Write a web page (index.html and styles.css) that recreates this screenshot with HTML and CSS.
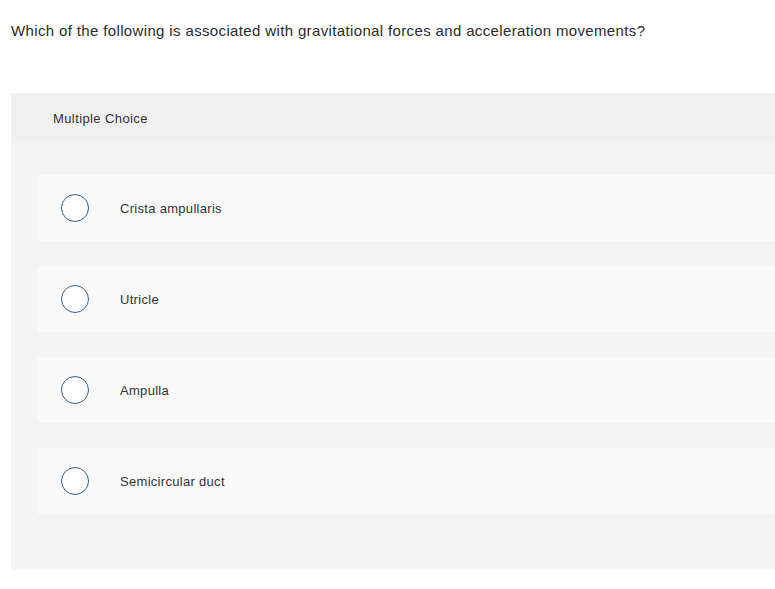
FILE: index.html
```html
<!DOCTYPE html>
<html>
<head>
<meta charset="utf-8">
<link rel="stylesheet" href="styles.css">
</head>
<body>
<div class="page">
  <p class="question">Which of the following is associated with gravitational forces and acceleration movements?</p>
  <div class="panel">
    <div class="panel-head">Multiple Choice</div>
    <div class="panel-body">
      <div class="option"><span class="radio"></span><span class="label">Crista ampullaris</span></div>
      <div class="option"><span class="radio"></span><span class="label">Utricle</span></div>
      <div class="option"><span class="radio"></span><span class="label">Ampulla</span></div>
      <div class="option"><span class="radio"></span><span class="label">Semicircular duct</span></div>
    </div>
  </div>
</div>
</body>
</html>
```
FILE: styles.css
```css
html, body {
  margin: 0;
  padding: 0;
  overflow: hidden;
  background: #ffffff;
}
.page {
  padding: 21px 0 0 11px;
  font-family: "Liberation Sans", Arial, sans-serif;
  color: #222;
}
.question {
  margin: 0;
  font-size: 15px;
  line-height: 20px;
  letter-spacing: 0.36px;
  color: #2b2b2b;
}
.panel {
  margin-top: 52px;
  width: 800px;
  background: #f4f4f4;
}
.panel-head {
  height: 50px;
  background: #f0f0f0;
  padding-left: 42px;
  display: flex;
  align-items: center;
  font-size: 13px;
  letter-spacing: 0.4px;
  color: #333;
}
.panel-body {
  padding: 32px 0 55px 26px;
  display: flex;
  flex-direction: column;
  gap: 25px;
}
.option {
  height: 66px;
  background: #fafafa;
  border-radius: 3px;
  display: flex;
  align-items: center;
  padding-left: 24px;
}
.radio {
  width: 26px;
  height: 26px;
  border: 1.5px solid #2f6192;
  border-radius: 50%;
  background: #fff;
  flex: none;
}
.label {
  margin-left: 31px;
  font-size: 13px;
  letter-spacing: 0.3px;
  color: #333;
}
```
